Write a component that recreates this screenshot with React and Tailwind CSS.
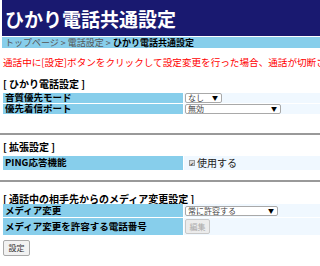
import React from "react";

function Select({ label, w }) {
  return (
    <div className={`flex items-center justify-between h-[10px] bg-white border border-[#a9a9a9] rounded-[2px] pl-[2px] pr-[3px] ${w}`}>
      <span className="text-[8px] leading-none text-[#444]">{label}</span>
      <span className="text-[6px] leading-none text-black">▼</span>
    </div>
  );
}

function Row({ label, children, h }) {
  return (
    <div className={`flex gap-[1px] ${h}`}>
      <div className="w-[180px] shrink-0 bg-[#87ceeb] pl-[2px] flex items-center text-[9.5px] font-bold text-black leading-none whitespace-nowrap">
        {label}
      </div>
      <div className="flex-1 bg-[#f0f8ff] pl-[1px] flex items-center">{children}</div>
    </div>
  );
}

export default function App() {
  return (
    <div
      className="w-[320px] h-[266px] overflow-hidden bg-white"
      style={{ fontFamily: '"Noto Sans CJK JP", "Noto Sans", sans-serif' }}
    >
      <div className="ml-[2px] h-[36px] bg-[#191970] text-white font-bold text-[19px] leading-none pl-[3px] flex items-center">
        ひかり電話共通設定
      </div>
      <div className="ml-[2px] mt-[1px] h-[11px] bg-[#87ceeb] pl-[3px] flex items-center text-[9px] leading-none whitespace-nowrap">
        <span className="text-[#555]">トップページ &gt; 電話設定 &gt; </span>
        <span className="font-bold text-black">&nbsp;ひかり電話共通設定</span>
      </div>
      <div className="mt-[10px] h-[10px] pl-[3px] text-[9.6px] leading-none text-[#ff0000] whitespace-nowrap overflow-hidden">
        通話中に[設定]ボタンをクリックして設定変更を行った場合、通話が切断されます。
      </div>

      <div className="pl-[3px] mt-[11px]">
        <div className="h-[10px] text-[10px] font-bold leading-none mb-[4px] whitespace-nowrap">[ ひかり電話設定 ]</div>
        <div className="flex flex-col gap-[1px]">
          <Row label="音質優先モード" h="h-[10px]">
            <Select label="なし" w="w-[37px]" />
          </Row>
          <Row label="優先着信ポート" h="h-[10px]">
            <Select label="無効" w="w-[96px]" />
          </Row>
        </div>
      </div>

      <div className="mt-[19px] border-t-2 border-[#999]" />

      <div className="pl-[3px] mt-[7px]">
        <div className="h-[10px] text-[10px] font-bold leading-none mb-[4px] whitespace-nowrap">[ 拡張設定 ]</div>
        <Row label="PING応答機能" h="h-[14px]">
          <div className="flex items-center gap-[2px] pl-[4px]">
            <div className="w-[6px] h-[6px] border border-[#999] bg-[#ddd] flex items-center justify-center text-[5px] leading-none text-[#333]">✔</div>
            <span className="text-[10px] leading-none text-[#222]">使用する</span>
          </div>
        </Row>
      </div>

      <div className="mt-[10px] border-t-2 border-[#999]" />

      <div className="pl-[3px] mt-[12px]">
        <div className="h-[10px] text-[10px] font-bold leading-none whitespace-nowrap">[ 通話中の相手先からのメディア変更設定 ]</div>
        <div className="flex flex-col gap-[1px]">
          <Row label="メディア変更" h="h-[13px]">
            <Select label="常に許容する" w="w-[93px]" />
          </Row>
          <Row label="メディア変更を許容する電話番号" h="h-[17px]">
            <div className="h-[15px] w-[25px] border border-[#c8c8c8] bg-[#ececec] rounded-[2px] flex items-center justify-center text-[8px] leading-none text-[#aaa]">
              編集
            </div>
          </Row>
        </div>
        <div className="mt-[5px] h-[16px] w-[27px] border border-[#aaa] bg-[#f2f2f2] rounded-[2px] flex items-center justify-center text-[8px] leading-none text-[#333]">
          設定
        </div>
      </div>
    </div>
  );
}
